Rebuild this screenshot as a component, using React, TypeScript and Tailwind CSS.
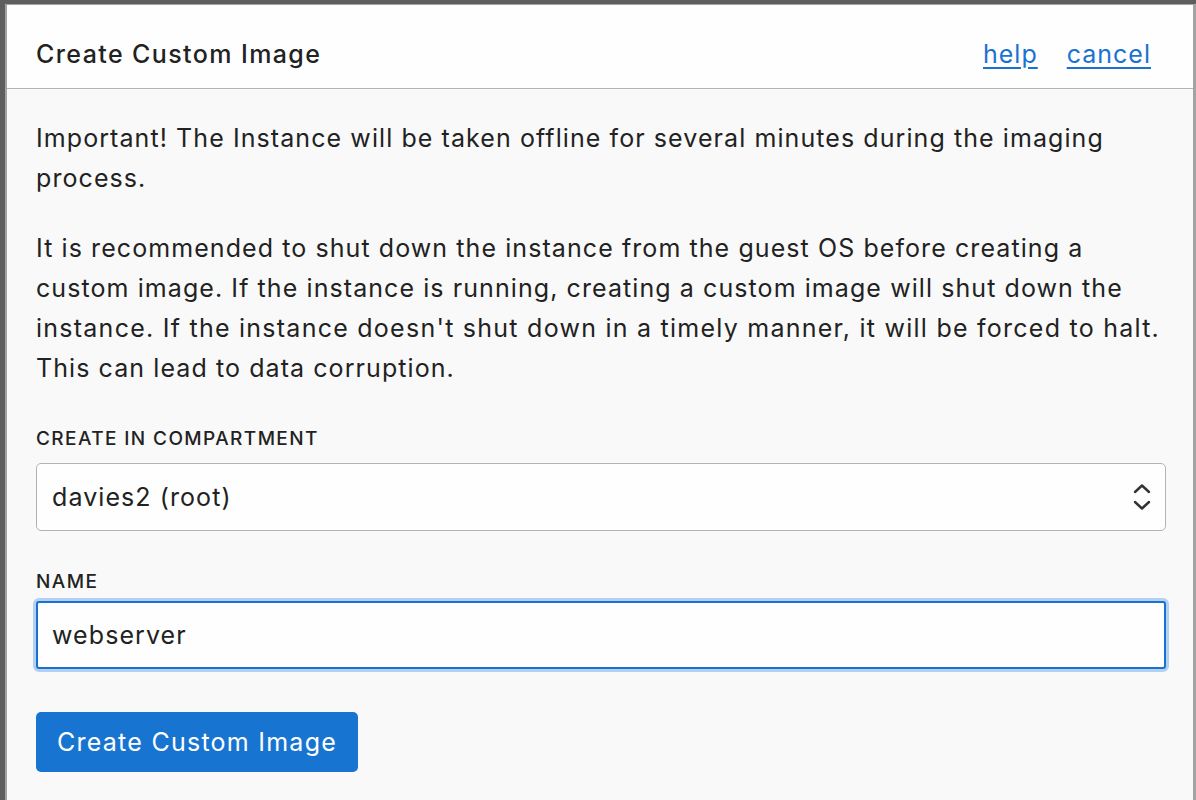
import React from "react";

export default function App() {
  const font = { fontFamily: "Inter, 'Noto Sans', sans-serif" };
  return (
    <div className="w-[1196px] h-[800px] overflow-hidden bg-[#5e5e5e] pt-[4px] pl-[5px] flex" style={font}>
      <div className="flex-1 flex flex-col border-t border-l-2 border-r-[3px] border-[#a3a3a3] bg-[#f9f9f9] min-w-0">
        <div className="h-[84px] shrink-0 bg-[#fefefe] border-b border-[#b3b3b3] flex items-start pt-[33px] pl-[29px] pr-[42px]">
          <h1 className="text-[25px] leading-[32px] font-medium tracking-[1.4px] text-[#222222] flex-1">Create Custom Image</h1>
          <div className="flex gap-[29px] text-[25px] leading-[32px] tracking-[1px] text-[#1a72d0]">
            <a className="underline underline-offset-[4px] decoration-[1.5px]">help</a>
            <a className="underline underline-offset-[4px] decoration-[1.5px]">cancel</a>
          </div>
        </div>
        <div className="flex-1 pt-[29px] pl-[29px] pr-[27px] text-[#222222] text-[25px] leading-[40px] tracking-[1.08px]">
          <p className="mb-[30px] whitespace-nowrap">
            Important! The Instance will be taken offline for several minutes during the imaging
            <br />
            process.
          </p>
          <p className="mb-[39px] whitespace-nowrap">
            It is recommended to shut down the instance from the guest OS before creating a
            <br />
            custom image. If the instance is running, creating a custom image will shut down the
            <br />
            <span className="tracking-[1.25px]">instance. If the instance doesn't shut down in a timely manner, it will be forced to halt.</span>
            <br />
            This can lead to data corruption.
          </p>
          <div className="text-[19px] leading-[24px] font-medium tracking-[1.4px] mb-[12px]">CREATE IN COMPARTMENT</div>
          <div className="h-[68px] bg-[#fefefe] border border-[#b3b3b3] rounded-[5px] flex items-center pl-[15px] pr-[14px] justify-between">
            <span>davies2 (root)</span>
            <svg width="18" height="30" viewBox="0 0 18 30" fill="none" stroke="#333" strokeWidth="2.4" strokeLinecap="round" strokeLinejoin="round">
              <path d="M2 10 L9 3.5 L16 10" />
              <path d="M2 20 L9 26.5 L16 20" />
            </svg>
          </div>
          <div className="text-[19px] leading-[24px] font-medium tracking-[1.4px] mt-[39px] mb-[7px]">NAME</div>
          <div className="h-[68px] bg-[#fefefe] border-2 border-[#1a72d0] rounded-[3px] ring-[3px] ring-[#b4d0f2] flex items-center pl-[14px]">
            <span>webserver</span>
          </div>
          <button className="mt-[43px] h-[60px] px-[21px] bg-[#1775d1] text-white rounded-[5px] text-[25px] leading-[32px] tracking-[1.25px]">
            Create Custom Image
          </button>
        </div>
      </div>
    </div>
  );
}
